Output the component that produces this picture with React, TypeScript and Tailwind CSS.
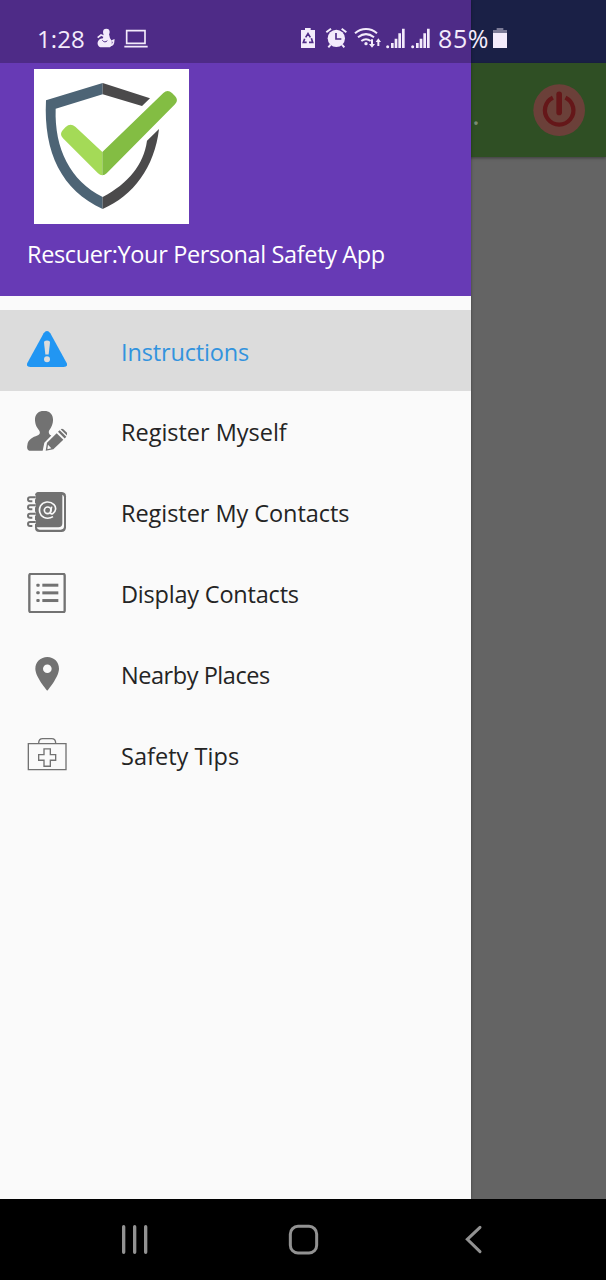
import type { ReactNode } from "react";

const Glyph = ({ box, className, children }: { box: string; className: string; children: ReactNode }) => (
  <svg viewBox={box} className={`shrink-0 ${className}`} fill="currentColor" aria-hidden="true">
    {children}
  </svg>
);

function SignalBars({ className }: { className: string }) {
  return (
    <Glyph box="288 0 60 138" className={`h-[46px] w-5 ${className}`}>
      <circle cx="293" cy="95" r="4.500" />
      <path d="M303 84h8v15h-8zM314 71h8v28h-8zM325 55h8v44h-8zM336 41h8v58h-8z" />
    </Glyph>
  );
}

function StatusBar() {
  return (
    <div className="absolute inset-x-0 top-0 flex h-[63px] items-start pt-[15px] text-[#f3ebfb]">
      <span className="ml-[37px] w-[60px] text-[24px] leading-[47px] tracking-[0.1px]">1:28</span>
      <Glyph box="231 0 54 138" className="h-[46px] w-[18px]">
        <circle cx="259" cy="51" r="10" />
        <path d="M251 56l16 1 3 13c7 8 8 20 0 27h-29c-9-5-10-14-6-20 4-5 9-7 14-7z" />
        <path d="M233 68l10-8 9 4M269 92c8 0 12-6 12-16l-7 3" fill="none" stroke="currentColor" strokeWidth="5" />
        <path d="M247 76c5 6 10 6 15 1" fill="none" stroke="#4e2b87" strokeWidth="3" />
      </Glyph>
      <Glyph box="311 0 72 138" className="ml-[9px] h-[46px] w-6">
        <path d="M319 47h55v38h-55zM312 95h70" fill="none" stroke="currentColor" strokeWidth="5" />
      </Glyph>
      <Glyph box="30 0 48 138" className="ml-[152px] h-[46px] w-4">
        <path d="M45 39h17v6h13v54H33V45h12z" />
        <path d="M47 67l7-11 7 11M64 70l4 12H57M50 82H40l4-11" fill="none" stroke="#4e2b87" strokeWidth="5" />
      </Glyph>
      <Glyph box="105 0 69 138" className="ml-[9px] h-[46px] w-[23px]">
        <circle cx="139" cy="70" r="26" />
        <path d="M109 52l14-11M155 41l14 11M122 89l-7 8M156 89l7 8" fill="none" stroke="currentColor" strokeWidth="6" />
        <path d="M138 54v18h16" fill="none" stroke="#4e2b87" strokeWidth="5" />
      </Glyph>
      <Glyph box="192 0 84 138" className="ml-[6px] h-[46px] w-7">
        <path d="M195 55c20-17 46-17 66 0M204 67c15-12 33-12 48 0M214 78c9-7 19-7 28 0" fill="none" stroke="currentColor" strokeWidth="6" />
        <circle cx="228" cy="86" r="5" />
        <path d="M243 73h6v14h6l-9 11-9-11h6zM262 93h6V81h5l-8-11-8 11h5z" />
      </Glyph>
      <SignalBars className="ml-1" />
      <SignalBars className="ml-[5px]" />
      <span className="ml-[7px] w-[55px] text-[25px] leading-[47px] tracking-[0.6px]">85%</span>
      <Glyph box="609 0 45 138" className="h-[46px] w-[15px]">
        <path d="M620 39h20v6h11v9h-42v-9h11z" opacity=".45" />
        <path d="M609 54h42v45h-42z" />
      </Glyph>
    </div>
  );
}

function ShieldLogo() {
  return (
    <svg viewBox="27 27 465 465" className="size-[155px] bg-white" aria-hidden="true">
      <path d="M233 69L63 121C55 278 110 391 233 447V411C136 362 88 266 92 146L233 103z" fill="#4d6475" />
      <path d="M233 69L375 115L351 138L233 103zM402 207C389 320 325 408 233 447V411C310 370 356 314 366 242z" fill="#4b4a4b" />
      <path d="M232 276L151 200Q136 188 122 201L113 211Q102 223 114 235L219 340Q225 346 232 346z" fill="#a4da57" />
      <path d="M232 276L415 99Q428 87 441 99L450 108Q462 121 450 133L245 340Q239 346 232 346z" fill="#83bd43" />
    </svg>
  );
}

const menu: { label: string; text: string; icon: ReactNode }[] = [
  {
    label: "Instructions",
    text: "tracking-[-0.15px]",
    icon: (
      <Glyph box="81 301.2 120 120" className="size-10">
        <path d="M131 311q10-13 20 0l49 89q5 12-9 12H91q-14 0-9-12z" />
        <path d="M132 339q0-6 9-6t9 6l-4 36h-10z" fill="#dcdcdc" />
        <circle cx="141" cy="389" r="9" fill="#dcdcdc" />
      </Glyph>
    ),
  },
  {
    label: "Register Myself",
    text: "tracking-[-0.02px]",
    icon: (
      <Glyph box="36 33.6 120 120" className="size-10">
        <path d="M87 33c18 0 28 12 27 29-1 16-8 24-12 31-2 7 1 11 7 14l-21 22-5 24H49c-12 0-14-7-12-17 2-18 17-24 30-29 8-3 9-8 6-14-5-8-12-15-13-31-1-17 9-29 27-29z" />
        <path d="M96 129l29-29 20 20-30 28-23 5z" />
        <path d="M99 135l10 10-12 3z" fill="#fafafa" />
        <path d="M129 96l5-5 20 20-5 5zM137 88q4-3 8 0l11 11q3 4 0 8z" />
      </Glyph>
    ),
  },
  {
    label: "Register My Contacts",
    text: "tracking-[-0.05px]",
    icon: (
      <Glyph box="36 276 120 120" className="size-10">
        <path d="M68 276h73q12 1 12 13v93q0 14-14 14H73q-13 0-13-13v-96q0-9 8-11z" />
        <path d="M142 284q5 2 5 8v87q0 10-10 10H74q-7 0-9-7h65q12 0 12-12z" fill="#fafafa" />
        {[294, 318, 343, 368].map((y) => (
          <g key={y} fill="none">
            <path d={`M62 ${y - 2}H45q-6 0-6 6t6 6h7`} stroke="#fafafa" strokeWidth="12" />
            <path d={`M62 ${y - 2}H45q-6 0-6 6t6 6h7`} stroke="currentColor" strokeWidth="6" />
          </g>
        ))}
        <g fill="none" stroke="#fafafa" strokeWidth="5">
          <circle cx="98" cy="331" r="10" />
          <path d="M110 320l-4 17q1 6 7 4c11-6 11-20 4-27-12-12-32-10-40 3-7 13-3 29 9 35 9 4 20 3 28-2" />
        </g>
      </Glyph>
    ),
  },
  {
    label: "Display Contacts",
    text: "tracking-[-0.2px]",
    icon: (
      <Glyph box="36 38.4 120 120" className="size-10">
        <rect x="43" y="41" width="106" height="115" rx="5" fill="none" stroke="currentColor" strokeWidth="7" />
        {[75, 98, 121].map((y) => (
          <g key={y}>
            <rect x="64" y={y - 4.5} width="10" height="9" rx="3" />
            <rect x="82" y={y - 4.5} width="48" height="9" />
          </g>
        ))}
      </Glyph>
    ),
  },
  {
    label: "Nearby Places",
    text: "tracking-[-0.45px]",
    icon: (
      <Glyph box="36 280.8 120 120" className="size-10">
        <path
          fillRule="evenodd"
          d="M97 290c-20 0-36 15-36 35 0 25 36 66 36 66s35-41 35-66c0-20-15-35-35-35zm0 22a13 13 0 1 1 0 26 13 13 0 0 1 0-26z"
        />
      </Glyph>
    ),
  },
  {
    label: "Safety Tips",
    text: "tracking-[0.04px]",
    icon: (
      <Glyph box="36 523.2 120 120" className="size-10">
        <g fill="none" stroke="currentColor" strokeWidth="4">
          <path d="M40 552h113v78H40zM71 551c0-10 5-14 12-14h27c8 0 12 4 12 14" />
          <path d="M87 568h19v17h16v17h-16v18H87v-18H71v-17h16z" />
        </g>
      </Glyph>
    ),
  },
];

function Drawer() {
  return (
    <aside className="absolute inset-y-0 left-0 flex w-[471px] flex-col bg-[#fafafa] shadow-[0_0_3px_rgba(0,0,0,0.35)]">
      <header className="flex h-[296px] flex-col bg-[#673ab5] text-white">
        <div className="h-[63px] bg-[#4e2b87]" />
        <div className="pt-[6px] pl-[34px]">
          <ShieldLogo />
        </div>
        <h1 className="mt-[13px] pl-[27px] text-[23.5px] leading-[34px] font-normal tracking-[-0.37px] whitespace-nowrap">
          Rescuer:Your Personal Safety App
        </h1>
      </header>
      <nav className="pt-[14px]">
        {menu.map(({ label, text, icon }, i) => (
          <a
            key={label}
            className={`flex h-[80.8px] items-center pl-[27px] ${i === 0 ? "bg-[#dcdcdc] text-[#2196f3]" : "text-[#727272]"}`}
          >
            {icon}
            <span
              className={`ml-[54px] pt-[2.4px] text-[23.5px] leading-[34px] whitespace-nowrap ${text} ${i === 0 ? "text-[#3293de]" : "text-[#242424]"}`}
            >
              {label}
            </span>
          </a>
        ))}
      </nav>
    </aside>
  );
}

export default function App() {
  return (
    <div className="flex h-[1280px] w-[606px] flex-col overflow-hidden font-['Open_Sans','Noto_Sans',sans-serif]">
      <main className="relative flex h-[1199px] flex-col bg-[#646464]">
        <div className="h-[63px] bg-[#1a2046]" />
        <div className="flex h-[94px] items-start justify-end bg-[#2f4f24] pt-[21px] pr-[21px] shadow-[0_1px_3px_rgba(0,0,0,0.4)]">
          <span className="mt-[13px] mr-[53px] text-[30px] leading-[34px] text-[#788b71]">.</span>
          <svg viewBox="217 101 157 157" className="size-[52px]" fill="none" stroke="#651719" aria-hidden="true">
            <circle cx="296" cy="180" r="78" fill="#6b4039" stroke="none" />
            <path d="M277 142a43 43 0 1 0 38 0" strokeWidth="13" />
            <path d="M296 132v55" strokeWidth="17" strokeLinecap="round" />
          </svg>
        </div>
        <Drawer />
        <StatusBar />
      </main>
      <footer className="flex h-[81px] items-center bg-black pl-[119px] text-[#929292]">
        <Glyph box="57 87 93 93" className="size-[31px]">
          <path d="M71 95v77M104 95v77M137 95v77" stroke="currentColor" strokeWidth="10" strokeLinecap="round" />
        </Glyph>
        <Glyph box="565 87 93 93" className="ml-[138px] size-[31px]">
          <rect x="572" y="94" width="79" height="80" rx="23" fill="none" stroke="currentColor" strokeWidth="9" />
        </Glyph>
        <Glyph box="1074 87 93 93" className="ml-[139px] size-[31px]">
          <path d="M1140 97l-38 36 38 37" fill="none" stroke="currentColor" strokeWidth="9" strokeLinecap="round" />
        </Glyph>
      </footer>
    </div>
  );
}
